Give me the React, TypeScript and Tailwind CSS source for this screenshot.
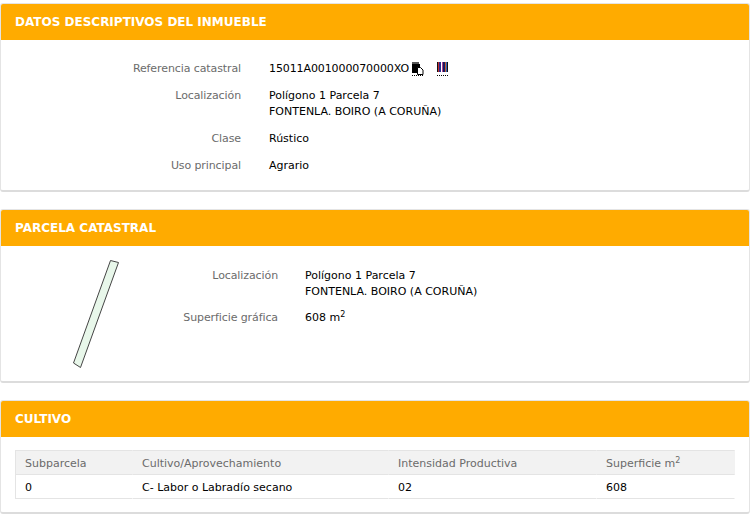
const font = "font-['DejaVu_Sans',sans-serif]"

const Card = ({ title, children, className }: { title: string; children: React.ReactNode; className: string }) => {
    return (
        <div className={`rounded-[3px] border border-[#e4e4e4] border-b-2 border-b-[#dcdcdc] bg-white overflow-hidden ${className}`}>
            <div className="flex h-9 items-center bg-[#ffab00] pl-[14px] text-[12px] font-bold text-white">
                {title}
            </div>
            {children}
        </div>
    )
}

const Row = ({ label, width, gap, children }: { label: string; width: string; gap: string; children: React.ReactNode }) => {
    return (
        <div className={`flex leading-4 ${gap}`}>
            <div className={`text-right text-[#6b6b6b] tracking-[-0.1px] ${width}`}>{label}</div>
            <div className="text-black">{children}</div>
        </div>
    )
}

const CopyIcon = () => (
    <svg width="13" height="14" viewBox="0 0 13 14">
        <rect x="1" y="0" width="7" height="2" fill="#555" />
        <rect x="1" y="2" width="8" height="9" fill="#000" />
        <path d="M6.500 5.500h3l2.500 2.500v4.500h-5.500z" fill="#fff" stroke="#000" />
        <path d="M1 13.500h12" stroke="#000" strokeDasharray="1 1" />
    </svg>
)

const BarcodeIcon = () => (
    <svg width="13" height="14" viewBox="0 0 13 14">
        <rect x="1" y="0" width="1" height="10" fill="#111" />
        <rect x="2" y="0" width="1" height="10" fill="#c03030" />
        <rect x="3" y="0" width="2" height="10" fill="#2a2a90" />
        <rect x="6" y="0" width="1" height="10" fill="#b04090" />
        <rect x="7" y="0" width="2" height="10" fill="#1a1a60" />
        <rect x="9" y="0" width="1" height="10" fill="#c06030" />
        <rect x="10" y="0" width="1" height="10" fill="#3060c0" />
        <rect x="11" y="0" width="1" height="10" fill="#111" />
        <path d="M1 13.500h12" stroke="#000" strokeDasharray="1 1" />
    </svg>
)

const ParcelDrawing = () => (
    <svg width="50" height="110" viewBox="0 0 50 110">
        <path d="M38.500 1.500 L46.500 3.500 L8.500 108.500 L1.500 104 Z" fill="#e8f7ea" stroke="#444" strokeWidth="1" />
    </svg>
)

const cols = ["w-[117px]", "w-[256px]", "w-[208px]", "flex-1"]
const cell = "flex h-full items-center pl-[9px] border-y border-y-[#e4e4e4] border-r border-r-transparent"

const App = () => {
    return (
        <div className={`w-[755px] h-[521px] bg-white text-[11px] ${font}`}>
            <div className="flex w-[750px] flex-col pt-[3px]">
                <Card title="DATOS DESCRIPTIVOS DEL INMUEBLE" className="h-[189px]">
                    <div className="flex flex-col gap-[11px] pt-[21px]">
                        <Row label="Referencia catastral" width="w-[240px]" gap="gap-[28px]">
                            <div className="flex items-center tracking-[-0.1px]">
                                15011A001000070000XO
                                <span className="ml-[2px]"><CopyIcon /></span>
                                <span className="ml-3"><BarcodeIcon /></span>
                            </div>
                        </Row>
                        <Row label="Localización" width="w-[240px]" gap="gap-[28px]">
                            <div>Polígono 1 Parcela 7</div>
                            <div>FONTENLA. BOIRO (A CORUÑA)</div>
                        </Row>
                        <Row label="Clase" width="w-[240px]" gap="gap-[28px]">Rústico</Row>
                        <Row label="Uso principal" width="w-[240px]" gap="gap-[28px]">Agrario</Row>
                    </div>
                </Card>
                <Card title="PARCELA CATASTRAL" className="mt-[17px] h-[174px]">
                    <div className="flex">
                        <div className="w-[71px] pl-[71px] pt-[13px]"><ParcelDrawing /></div>
                        <div className="flex flex-col gap-[10px] pt-[22px]">
                            <Row label="Localización" width="w-[206px]" gap="gap-[27px]">
                                <div>Polígono 1 Parcela 7</div>
                                <div>FONTENLA. BOIRO (A CORUÑA)</div>
                            </Row>
                            <Row label="Superficie gráfica" width="w-[206px]" gap="gap-[27px]">
                                608 m<sup className="text-[8px]">2</sup>
                            </Row>
                        </div>
                    </div>
                </Card>
                <Card title="CULTIVO" className="mt-[17px] h-[114px]">
                    <div className="pl-[14px] pt-[13px] w-[734px]">
                        <div className="flex h-[25px] border-l border-l-[#e4e4e4] bg-[#f2f2f2] text-[#6b6b6b]">
                            {["Subparcela", "Cultivo/Aprovechamiento", "Intensidad Productiva"].map((h, i) => (
                                <div key={h} className={`${cell} ${cols[i]}`}><span className="pt-[3px]">{h}</span></div>
                            ))}
                            <div className={`${cell} ${cols[3]}`}><span className="pt-[3px]">Superficie m<sup className="text-[8px]">2</sup></span></div>
                        </div>
                        <div className="flex h-6 border-l border-l-[#e4e4e4] text-black [&>div]:border-t-0">
                            {["0", "C- Labor o Labradío secano", "02", "608"].map((c, i) => (
                                <div key={c} className={`${cell} ${cols[i]}`}><span className="pt-[3px]">{c}</span></div>
                            ))}
                        </div>
                    </div>
                </Card>
            </div>
        </div>
    )
}

export default App
